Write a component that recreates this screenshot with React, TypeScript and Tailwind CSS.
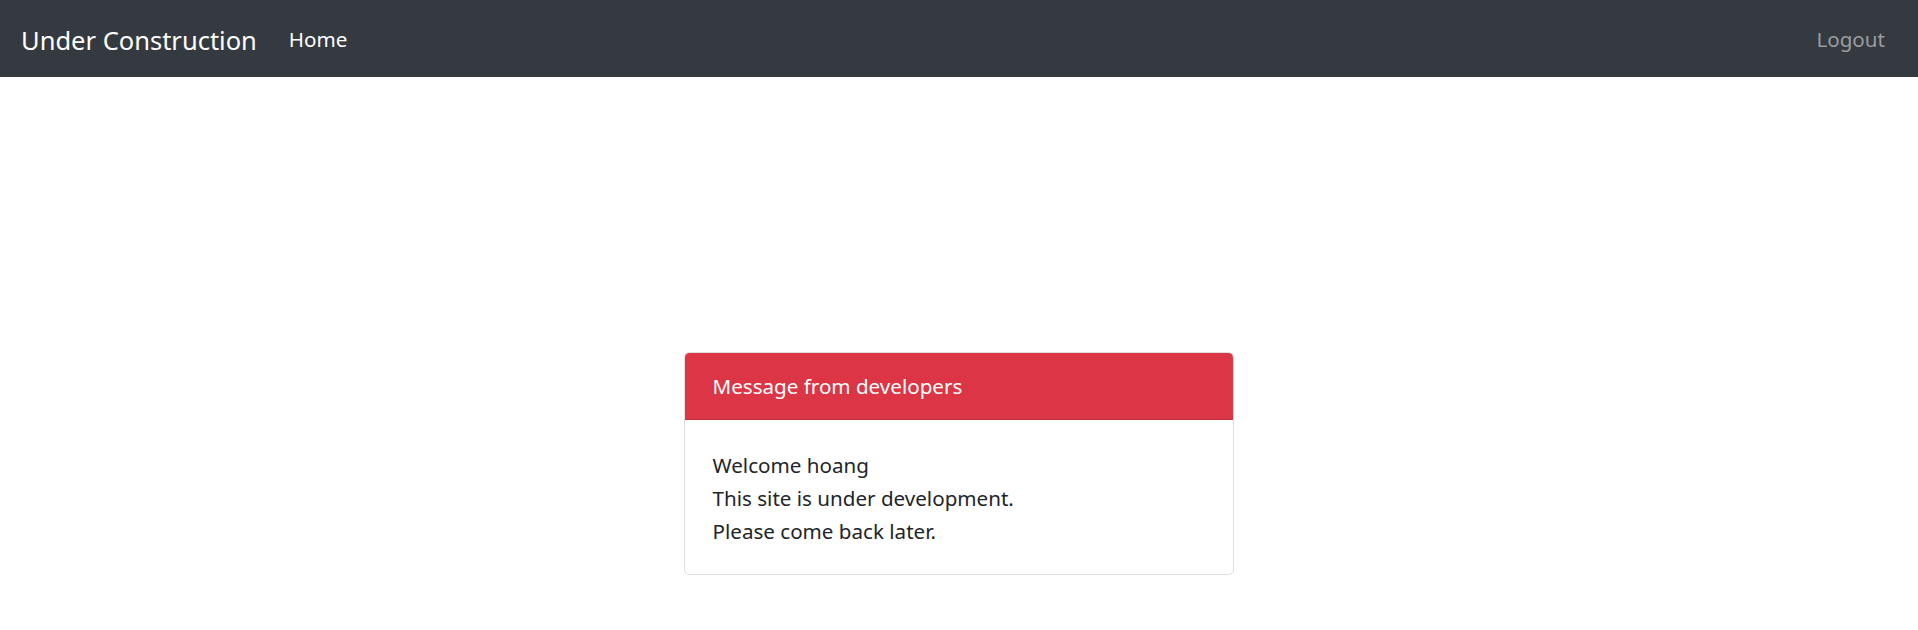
import React from "react";

export default function App() {
  return (
    <div className="min-h-[630px] bg-white text-[#212529] font-['Segoe_UI','Noto_Sans',sans-serif]">
      <nav className="flex h-[77px] items-center bg-[#343a40] pl-[21px] pr-[22px]">
        <a className="mr-[21px] pt-[4px] text-[25.5px] leading-[41px] text-white" href="#">
          Under Construction
        </a>
        <a className="px-[11px] pt-[2px] text-[20.6px] leading-[33px] text-white" href="#">
          Home
        </a>
        <div className="flex-1" />
        <a className="px-[11px] pt-[2px] text-[20.6px] leading-[33px] text-[#9a9da0]" href="#">
          Logout
        </a>
      </nav>
      <div className="flex justify-center pt-[275px]">
        <div className="w-[550px] overflow-hidden rounded-[5.5px] border border-[rgba(0,0,0,0.125)]">
          <div className="border-b border-[rgba(0,0,0,0.125)] bg-[#dc3545] px-[27.5px] py-[16.5px] text-[20.6px] leading-[33px] text-white">
            Message from developers
          </div>
          <div className="px-[27.5px] pt-[28.5px] pb-[26.5px] text-[20.6px] leading-[33px]">
            <div>Welcome hoang</div>
            <div>This site is under development.</div>
            <div>Please come back later.</div>
          </div>
        </div>
      </div>
    </div>
  );
}
